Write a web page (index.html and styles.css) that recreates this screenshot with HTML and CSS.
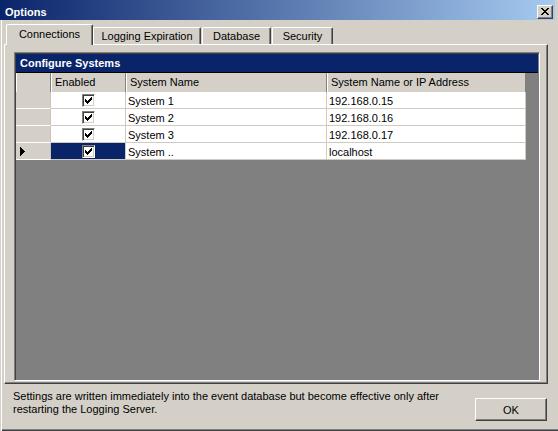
FILE: index.html
```html
<!DOCTYPE html>
<html>
<head>
<meta charset="utf-8">
<link rel="stylesheet" href="styles.css">
</head>
<body>
<div class="window">
  <div class="titlebar">
    <span class="title">Options</span>
    <span class="close-btn">
      <svg width="8" height="7" viewBox="0 0 8 7" shape-rendering="crispEdges">
        <path d="M0 0h2v1h-2zM6 0h2v1h-2zM1 1h2v1h-2zM5 1h2v1h-2zM2 2h4v1h-4zM3 3h2v1h-2zM2 4h4v1h-4zM1 5h2v1h-2zM5 5h2v1h-2zM0 6h2v1h-2zM6 6h2v1h-2z" fill="#000"/>
      </svg>
    </span>
  </div>
  <div class="tabs">
    <div class="tab tab-active">Connections</div>
    <div class="tab tab-logging">Logging Expiration</div>
    <div class="tab tab-database">Database</div>
    <div class="tab tab-security">Security</div>
  </div>
  <div class="panel">
    <div class="grid-frame">
      <div class="grid-caption">Configure Systems</div>
      <div class="grid-table">
        <div class="hcell hcell-corner"></div>
        <div class="hcell">Enabled</div>
        <div class="hcell">System Name</div>
        <div class="hcell">System Name or IP Address</div>

        <div class="rowhead"></div>
        <div class="cell cell-check"><span class="check"><svg width="7" height="7" viewBox="0 0 7 7" shape-rendering="crispEdges"><path d="M6 0h1v1h-1zM5 1h2v1h-2zM0 2h1v1h-1zM4 2h3v1h-3zM0 3h2v1h-2zM3 3h3v1h-3zM0 4h5v1h-5zM1 5h3v1h-3zM2 6h1v1h-1z" fill="#000"/></svg></span></div>
        <div class="cell">System 1</div>
        <div class="cell">192.168.0.15</div>

        <div class="rowhead"></div>
        <div class="cell cell-check"><span class="check"><svg width="7" height="7" viewBox="0 0 7 7" shape-rendering="crispEdges"><path d="M6 0h1v1h-1zM5 1h2v1h-2zM0 2h1v1h-1zM4 2h3v1h-3zM0 3h2v1h-2zM3 3h3v1h-3zM0 4h5v1h-5zM1 5h3v1h-3zM2 6h1v1h-1z" fill="#000"/></svg></span></div>
        <div class="cell">System 2</div>
        <div class="cell">192.168.0.16</div>

        <div class="rowhead"></div>
        <div class="cell cell-check"><span class="check"><svg width="7" height="7" viewBox="0 0 7 7" shape-rendering="crispEdges"><path d="M6 0h1v1h-1zM5 1h2v1h-2zM0 2h1v1h-1zM4 2h3v1h-3zM0 3h2v1h-2zM3 3h3v1h-3zM0 4h5v1h-5zM1 5h3v1h-3zM2 6h1v1h-1z" fill="#000"/></svg></span></div>
        <div class="cell">System 3</div>
        <div class="cell">192.168.0.17</div>

        <div class="rowhead rowhead-current"><svg width="5" height="9" viewBox="0 0 5 9" shape-rendering="crispEdges"><path d="M0 0h1v9h-1zM1 1h1v7h-1zM2 2h1v5h-1zM3 3h1v3h-1zM4 4h1v1h-1z" fill="#000"/></svg></div>
        <div class="cell cell-check cell-selected"><span class="check"><svg width="7" height="7" viewBox="0 0 7 7" shape-rendering="crispEdges"><path d="M6 0h1v1h-1zM5 1h2v1h-2zM0 2h1v1h-1zM4 2h3v1h-3zM0 3h2v1h-2zM3 3h3v1h-3zM0 4h5v1h-5zM1 5h3v1h-3zM2 6h1v1h-1z" fill="#000"/></svg></span></div>
        <div class="cell">System ..</div>
        <div class="cell">localhost</div>
      </div>
    </div>
  </div>
  <div class="footer">
    <p class="note">Settings are written immediately into the event database but become effective only after<br>restarting the Logging Server.</p>
    <button class="ok-btn">OK</button>
  </div>
</div>
</body>
</html>
```

FILE: styles.css
```css
* { box-sizing: border-box; }

html, body {
  margin: 0;
  padding: 0;
  background: #d4d0c8;
}

body {
  font-family: "Liberation Sans", Arial, sans-serif;
  font-size: 11px;
  color: #000;
}

.window {
  width: 558px;
  height: 431px;
  background: #d4d0c8;
  display: flex;
  flex-direction: column;
  box-shadow: inset 1px 0 0 #d4d0c8, inset 2px 0 0 #ffffff, inset 0 -1px 0 #404040, inset 0 -2px 0 #808080;
  overflow: hidden;
}

/* Title bar */
.titlebar {
  height: 20px;
  margin-right: 3px;
  background: linear-gradient(to right, #0a246a, #a6caf0);
  display: flex;
  align-items: flex-start;
  justify-content: space-between;
  padding: 0 2px 0 5px;
  flex: none;
}

.title {
  color: #fff;
  font-weight: bold;
  font-size: 11px;
  line-height: 13px;
  margin-top: 6px;
}

.close-btn {
  width: 16px;
  height: 14px;
  margin-top: 5px;
  background: #d4d0c8;
  border: 1px solid;
  border-color: #fff #404040 #404040 #fff;
  box-shadow: inset -1px -1px 0 #808080;
  display: flex;
  align-items: center;
  justify-content: center;
  padding: 0 1px 1px 0;
}

.close-btn svg { display: block; }

/* Tabs */
.tabs {
  height: 24px;
  display: flex;
  align-items: flex-end;
  padding-left: 6px;
  flex: none;
}

.tab {
  height: 17px;
  background: #d4d0c8;
  border-top: 1px solid #fff;
  border-left: 1px solid #fff;
  border-right: 1px solid #404040;
  box-shadow: inset -1px 0 0 #808080;
  border-radius: 2px 2px 0 0;
  text-align: center;
  line-height: 17px;
  white-space: nowrap;
}

.tab-active {
  width: 87px;
  height: 21px;
  margin-bottom: -1px;
  line-height: 18px;
  position: relative;
  z-index: 1;
}

.tab-logging { width: 108px; }
.tab-database { width: 69px; margin-left: 1px; }
.tab-security { width: 61px; margin-left: 1px; }

/* Panel */
.panel {
  width: 544px;
  height: 340px;
  margin-left: 4px;
  flex: none;
  border: 1px solid;
  border-color: #fff #404040 #404040 #fff;
  box-shadow: inset -1px -1px 0 #808080;
  padding: 7px 7px 2px 9px;
  display: flex;
}

.grid-frame {
  flex: 1;
  border: 1px solid;
  border-color: #808080 #fff #fff #808080;
  box-shadow: inset 1px 1px 0 #404040;
  background: #808080;
  padding: 1px 0 0 1px;
  display: flex;
  flex-direction: column;
}

.grid-caption {
  height: 19px;
  background: #0a246a;
  color: #fff;
  font-weight: bold;
  line-height: 18px;
  padding-left: 4px;
  border-bottom: 1px solid #000;
  margin-right: 1px;
}

.grid-table {
  display: grid;
  grid-template-columns: 35px 75px 201px 199px;
  grid-auto-rows: 17px;
  grid-template-rows: 19px;
  align-self: flex-start;
}

.hcell {
  background: #d4d0c8;
  border-right: 1px solid #808080;
  box-shadow: inset 1px 0 0 #fff;
  padding-left: 4px;
  line-height: 19px;
  white-space: nowrap;
}

.hcell-corner { padding: 0; }

.rowhead {
  background: #d4d0c8;
  border-right: 1px solid #c8c4bc;
  border-bottom: 1px solid #fff;
  display: flex;
  align-items: center;
  padding-left: 4px;
}

.rowhead svg { display: block; }

.cell {
  background: #fff;
  border-right: 1px solid #cfcbc3;
  border-bottom: 1px solid #cfcbc3;
  padding: 2px 0 0 2px;
  line-height: 14px;
  white-space: nowrap;
}

.cell-check {
  padding: 0;
  display: flex;
  align-items: center;
  justify-content: center;
}

.cell-selected { background: #0a246a; }

.check {
  width: 13px;
  height: 13px;
  background: #fff;
  border: 1px solid;
  border-color: #808080 #fff #fff #808080;
  box-shadow: inset 1px 1px 0 #404040, inset -1px -1px 0 #d4d0c8;
  padding: 2px;
  display: block;
  margin-left: 1px;
}

.check svg { display: block; }

/* Footer */
.footer {
  flex: 1;
  display: flex;
  justify-content: space-between;
  align-items: flex-start;
  padding: 6px 11px 0 13px;
}

.note {
  margin: 0;
  line-height: 13px;
  white-space: nowrap;
}

.ok-btn {
  width: 72px;
  height: 23px;
  margin-top: 8px;
  background: #d4d0c8;
  border: 1px solid;
  border-color: #fff #404040 #404040 #fff;
  box-shadow: inset -1px -1px 0 #808080;
  font-family: "Liberation Sans", Arial, sans-serif;
  font-size: 11px;
  color: #000;
  padding: 0;
}
```
